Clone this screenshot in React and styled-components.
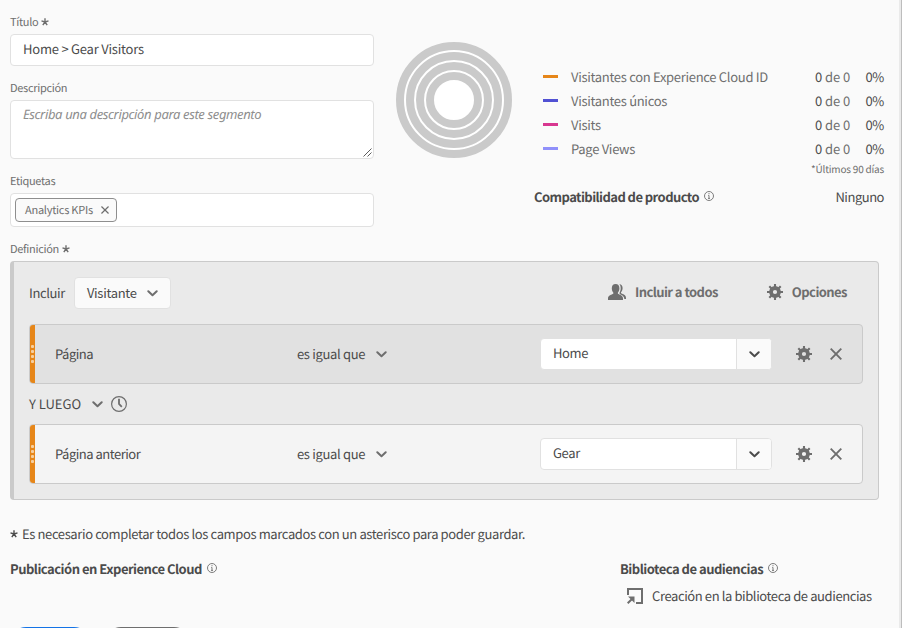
import React from 'react';
import styled, { createGlobalStyle, css } from 'styled-components';

const GlobalStyle = createGlobalStyle`
  *, *::before, *::after { box-sizing: border-box; }
  body {
    margin: 0;
    background: #fafafa;
    color: #4b4b4b;
    font: 13px/20px "Noto Sans CJK JP", "Noto Sans", sans-serif;
    letter-spacing: -0.38px;
    text-rendering: geometricPrecision;
    overflow: hidden;
  }
  svg { display: block; flex: none; }
`;

const Page = styled.main`
  width: 902px;
  height: 628px;
  overflow: hidden;
  padding: 14px 0 0 10px;
  border-right: 1px solid #bdbdbd;
  box-shadow: inset -2px 0 0 #eaeaea;
`;

const TopSection = styled.section`
  display: flex;
  height: 227px;
`;

const Form = styled.div`
  width: 364px;
  display: flex;
  flex-direction: column;
`;

const Label = styled.label`
  display: flex;
  align-items: center;
  gap: 3px;
  height: 16px;
  font-size: 11px;
  line-height: 16px;
  letter-spacing: -0.3px;
  color: #6e6e6e;
`;

const Control = styled.div`
  height: ${(p) => p.$height}px;
  margin: 4px 0 ${(p) => p.$after}px;
  border: 1px solid #e1e1e1;
  border-radius: 4px;
  background: #fff;
  padding: ${(p) => p.$pad || '4px 12px'};
  display: flex;
  letter-spacing: -0.22px;
`;

const DescriptionBox = styled(Control)`
  justify-content: space-between;
  padding: 3px 1px 0 12px;
`;

const Placeholder = styled.span`
  font: italic 13px/20px "Noto Sans", sans-serif;
  letter-spacing: -0.36px;
  color: #8e8e8e;
`;

const ResizeGrip = styled.svg`
  align-self: flex-end;
  margin-bottom: 1px;
`;

const Tag = styled.span`
  display: flex;
  align-items: center;
  justify-content: space-between;
  height: 24px;
  width: 102px;
  padding: 0 7px 0 9px;
  border: 1px solid #8e8e8e;
  border-radius: 4px;
  background: #fafafa;
  font-size: 11px;
  letter-spacing: -0.25px;
  white-space: nowrap;
  color: #6e6e6e;
`;

const RingWrap = styled.div`
  margin: 28px 0 0 22px;
  width: 116px;
`;

const Stats = styled.div`
  width: 350px;
  margin-left: 22px;
  padding-top: 51px;
`;

const Metric = styled.div`
  display: grid;
  grid-template-columns: 15px 1fr 37px 19px;
  column-gap: 13px;
  align-items: center;
  height: 24px;
  padding-left: 9px;
  color: #6e6e6e;
  letter-spacing: -0.3px;
`;

const Swatch = styled.i`
  height: 3px;
  margin-top: -1px;
  background: ${(p) => p.$color};
`;

const Count = styled.span`
  letter-spacing: -0.05px;
  white-space: nowrap;
`;

const Strong = styled.span`
  color: #4b4b4b;
`;

const Percent = styled(Strong)`
  text-align: right;
`;

const Footnote = styled.div`
  height: 16px;
  font-size: 10px;
  line-height: 16px;
  letter-spacing: -0.2px;
  text-align: right;
  color: #6e6e6e;
`;

const Compatibility = styled.div`
  display: flex;
  justify-content: space-between;
  margin-top: 10px;
  letter-spacing: -0.48px;
`;

const Heading = styled.h3`
  display: flex;
  gap: 5px;
  margin: 0;
  font-size: 13px;
  line-height: 20px;
  font-weight: 700;
  letter-spacing: ${(p) => (p.$tight ? '-0.56px' : '-0.5px')};
  svg { margin-top: 4px; }
`;

const Definition = styled.section`
  width: 869px;
  height: 239px;
  margin-top: 4px;
  padding: 15px 15px 0;
  border: 1px solid #cacaca;
  border-left-width: 4px;
  border-radius: 4px;
  background: #eaeaea;
`;

const DefinitionHeader = styled.header`
  display: flex;
  align-items: center;
  height: 32px;
  margin-bottom: 15px;
`;

const Select = styled.button`
  display: flex;
  align-items: center;
  justify-content: space-between;
  width: 97px;
  height: 32px;
  margin: 0 auto 0 9px;
  padding: 0 12px;
  border: 1px solid #e1e1e1;
  border-radius: 4px;
  background: #fafafa;
  color: inherit;
  font: inherit;
  letter-spacing: -0.3px;
`;

const QuietAction = styled.span`
  display: flex;
  align-items: center;
  gap: 9px;
  margin-left: 49px;
  margin-top: -2px;
  font-weight: 700;
  letter-spacing: -0.56px;
  color: #6e6e6e;
  &:last-child { margin-right: 16px; }
`;

const Rule = styled.div`
  display: flex;
  align-items: center;
  width: 834px;
  height: 60px;
  padding-right: 20px;
  border: 1px solid #cacaca;
  border-radius: 4px;
  background: ${(p) => (p.$active ? '#e1e1e1' : '#f4f4f4')};
  overflow: hidden;
`;

const Handle = styled.div`
  display: flex;
  flex-direction: column;
  align-items: center;
  justify-content: center;
  gap: 2px;
  width: 5px;
  height: 58px;
  background: #e68619;
`;

const Dot = styled.i`
  width: 3px;
  height: 3px;
  border-radius: 1px;
  background: #f6cf9f;
`;

const Dimension = styled.span`
  width: 262px;
  padding-left: 20px;
  letter-spacing: -0.5px;
`;

const Operator = styled.span`
  display: flex;
  align-items: center;
  gap: 11px;
  width: 243px;
  letter-spacing: -0.33px;
`;

const Combo = styled.div`
  display: flex;
  width: 232px;
  height: 32px;
  margin-right: auto;
  border: 1px solid #e1e1e1;
  border-radius: 4px;
  background: #fff;
  overflow: hidden;
`;

const ComboValue = styled.span`
  flex: 1;
  padding: 4px 12px;
`;

const ComboButton = styled.span`
  display: flex;
  align-items: center;
  justify-content: center;
  width: 35px;
  border-left: 1px solid #e1e1e1;
  background: #fafafa;
`;

const RuleActions = styled.div`
  display: flex;
  align-items: center;
  gap: 18px;
`;

const Sequence = styled.div`
  display: flex;
  align-items: center;
  height: 40px;
  letter-spacing: 0;
  gap: 11px;
  svg + svg { margin-left: -3px; }
`;

const RequiredNote = styled.p`
  display: flex;
  align-items: center;
  gap: 4px;
  margin: 24px 0 15px;
`;

const Publishing = styled.section`
  display: flex;
  height: 68px;
`;

const PublishColumn = styled.div`
  width: ${(p) => p.$width}px;
`;

const LibraryLink = styled.div`
  display: flex;
  align-items: center;
  gap: 9px;
  margin: 7px 0 0 7px;
  letter-spacing: -0.4px;
`;

const ButtonBar = styled.footer`
  display: flex;
  gap: 15px;
`;

const PillButton = styled.span`
  flex: none;
  width: ${(p) => (p.$primary ? 80 : 85)}px;
  height: 32px;
  border-radius: 16px;
  ${(p) =>
    p.$primary
      ? css`background: #1473e6;`
      : css`border: 2px solid #6e6e6e;`}
`;

const Star = ({ color = '#6e6e6e' }) => (
  <svg width="8" height="8" viewBox="0 0 8 8" stroke={color} strokeWidth="1.4">
    <path d="M4 4V.2M4 4L.5 2.9M4 4l3.500-1.100M4 4L1.800 7.200M4 4l2.200 3.200" />
  </svg>
);

const Info = () => (
  <svg width="10" height="10" viewBox="0 0 10 10" fill="none" stroke="#6e6e6e">
    <circle cx="5" cy="5" r="4.5" strokeWidth=".9" />
    <path d="M5 2.1v1.1M4.2 4.4H5v3M4 7.4h2" strokeWidth=".9" />
  </svg>
);

const Chevron = ({ color = '#6e6e6e' }) => (
  <svg width="11" height="7" viewBox="0 0 11 7" fill="none" stroke={color} strokeWidth="2" strokeLinecap="round" strokeLinejoin="round">
    <path d="M1.3 1.3l4.2 4 4.2-4" />
  </svg>
);

const Cross = ({ size, weight }) => (
  <svg width={size} height={size} viewBox="0 0 12 12" stroke="#6e6e6e" strokeWidth={weight}>
    <path d="M.7.7l10.6 10.6M11.3.7L.7 11.3" />
  </svg>
);

const Gear = () => (
  <svg width="16" height="16" viewBox="0 0 16 16" fill="none" stroke="#6e6e6e">
    <circle cx="8" cy="8" r="4" strokeWidth="3.8" />
    <path d="M8 0v3M8 13v3M0 8h3M13 8h3M2.3 2.3l2.2 2.2M11.5 11.5l2.2 2.2M13.7 2.3l-2.2 2.2M4.5 11.5l-2.2 2.2" strokeWidth="2.1" />
  </svg>
);

const People = () => (
  <svg width="18" height="16" viewBox="0 0 18 16" fill="#6e6e6e">
    <path d="M7.6 0C10 0 11.4 1.6 11.4 4.2c0 1.900-.6 3.300-1.500 4.300v1.200c1.500.9 5.100 1.400 5.100 4.600V16H0v-1.700c0-3.200 3.800-3.700 5.300-4.600V8.500C4.400 7.500 3.800 6.100 3.800 4.200 3.800 1.600 5.200 0 7.600 0z" />
    <path d="M11.300.1c2 .2 3.300 1.700 3.300 4 0 1.900-.7 3.300-1.600 4.200v1c1.900.9 5 1.500 5 4.600V15h-1.700c0-3.500-3.300-4.300-4.700-5.100V8.400c.7-1 1.100-2.500 1.100-4.200 0-1.700-.5-3.100-1.400-4.100z" />
  </svg>
);

const Clock = () => (
  <svg width="16" height="16" viewBox="0 0 16 16" fill="none" stroke="#6e6e6e">
    <circle cx="8" cy="8" r="7.4" strokeWidth="1.2" />
    <path d="M8 2.800V8l2.800 2.800" strokeWidth="1.8" />
  </svg>
);

const OpenIn = () => (
  <svg width="16" height="16" viewBox="0 0 16 16" fill="none" stroke="#6e6e6e" strokeWidth="2">
    <path d="M1 7V1h14v14H9M.7 15.300l4.800-4.800" />
    <path d="M1 8.500h6.500V15z" fill="#6e6e6e" stroke="none" />
  </svg>
);

const Rings = () => (
  <svg width="116" height="116" viewBox="0 0 116 116">
    <circle cx="58" cy="58" r="57" fill="#fff" />
    {[54, 44, 34, 24].map((r) => (
      <circle key={r} cx="58" cy="58" r={r} fill="none" stroke="#cacaca" strokeWidth="8" />
    ))}
  </svg>
);

const METRICS = [
  ['Visitantes con Experience Cloud ID', '#e68619'],
  ['Visitantes únicos', '#5151d3'],
  ['Visits', '#d83790'],
  ['Page Views', '#9090fa'],
];

const RuleRow = ({ name, value, active }) => (
  <Rule $active={active}>
    <Handle><Dot /><Dot /><Dot /><Dot /></Handle>
    <Dimension>{name}</Dimension>
    <Operator>es igual que <Chevron /></Operator>
    <Combo>
      <ComboValue>{value}</ComboValue>
      <ComboButton><Chevron color="#4b4b4b" /></ComboButton>
    </Combo>
    <RuleActions><Gear /><Cross size={12} weight={1.9} /></RuleActions>
  </Rule>
);

export default function App() {
  return (
    <>
      <GlobalStyle />
      <Page>
        <TopSection>
          <Form>
            <Label>Título <Star /></Label>
            <Control $height={32} $after={14}>Home &gt; Gear Visitors</Control>
            <Label>Descripción</Label>
            <DescriptionBox $height={59} $after={14}>
              <Placeholder>Escriba una descripción para este segmento</Placeholder>
              <ResizeGrip width="9" height="9" viewBox="0 0 9 9" stroke="#4b4b4b" strokeWidth=".9">
                <path d="M.5 8.500l8-8M4.500 8.500l4-4" />
              </ResizeGrip>
            </DescriptionBox>
            <Label>Etiquetas</Label>
            <Control $height={34} $after={0} $pad="4px">
              <Tag>Analytics KPIs <Cross size={8} weight={1.8} /></Tag>
            </Control>
          </Form>
          <RingWrap><Rings /></RingWrap>
          <Stats>
            {METRICS.map(([name, color]) => (
              <Metric key={name}>
                <Swatch $color={color} />
                <span>{name}</span>
                <Count><Strong>0</Strong> de 0</Count>
                <Percent>0%</Percent>
              </Metric>
            ))}
            <Footnote>*Últimos 90 días</Footnote>
            <Compatibility>
              <Heading $tight>Compatibilidad de producto <Info /></Heading>
              <span>Ninguno</span>
            </Compatibility>
          </Stats>
        </TopSection>

        <Label>Definición <Star /></Label>
        <Definition>
          <DefinitionHeader>
            Incluir
            <Select>Visitante <Chevron /></Select>
            <QuietAction><People /> Incluir a todos</QuietAction>
            <QuietAction><Gear /> Opciones</QuietAction>
          </DefinitionHeader>
          <RuleRow name="Página" value="Home" active />
          <Sequence>Y LUEGO <Chevron /><Clock /></Sequence>
          <RuleRow name="Página anterior" value="Gear" />
        </Definition>

        <RequiredNote>
          <Star color="#4b4b4b" />
          Es necesario completar todos los campos marcados con un asterisco para poder guardar.
        </RequiredNote>
        <Publishing>
          <PublishColumn $width={610}>
            <Heading>Publicación en Experience Cloud <Info /></Heading>
          </PublishColumn>
          <PublishColumn $width={270}>
            <Heading>Biblioteca de audiencias <Info /></Heading>
            <LibraryLink><OpenIn /> Creación en la biblioteca de audiencias</LibraryLink>
          </PublishColumn>
        </Publishing>
        <ButtonBar>
          <PillButton $primary />
          <PillButton />
        </ButtonBar>
      </Page>
    </>
  );
}
